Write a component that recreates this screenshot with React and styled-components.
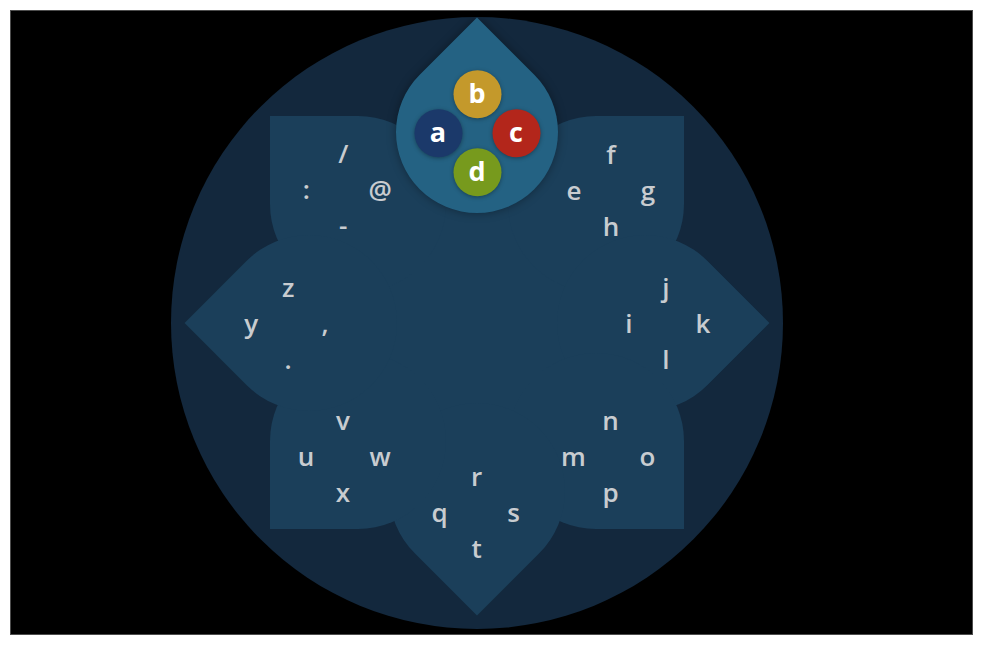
import React from "react";
import styled, { createGlobalStyle } from "styled-components";

const GlobalStyle = createGlobalStyle`
  html, body { margin: 0; padding: 0; background: #ffffff; }
  body { font-family: "Open Sans", "Noto Sans", sans-serif; }
`;

const Page = styled.div`
  padding: 10px;
  width: 982px;
  height: 646px;
  box-sizing: border-box;
`;

const Screen = styled.div`
  width: 963px;
  height: 625px;
  box-sizing: border-box;
  background: #000;
  border: 1px solid #4d4d4d;
  display: flex;
  align-items: center;
  padding-left: 160px;
`;

const Dial = styled.div`
  position: relative;
  width: 612px;
  height: 612px;
  flex: none;
  border-radius: 50%;
  background: #13283d;
  overflow: hidden;
  display: flex;
  align-items: center;
  justify-content: center;
`;

const CenterDisc = styled.div`
  width: 260px;
  height: 260px;
  border-radius: 50%;
  background: #1b3f5a;
`;

/* A petal: a square with three rounded corners; its sharp corner points outward. */
const Petal = styled.div`
  position: absolute;
  width: ${(p) => p.$size}px;
  height: ${(p) => p.$size}px;
  margin: ${(p) => -p.$size / 2}px 0 0 ${(p) => -p.$size / 2}px;
  box-sizing: border-box;
  border-radius: 0 50% 50% 50%;
  background: ${(p) => p.$color};
  box-shadow: ${(p) => (p.$shadow ? "0 0 10px rgba(0,0,0,0.35)" : "none")};
  display: flex;
  align-items: center;
  justify-content: center;
  padding: ${(p) => (p.$shift ? `0 ${p.$shift}px ${p.$shift}px 0` : "0")};
`;

const Cluster = styled.div`
  flex: none;
  display: grid;
  grid-template-columns: repeat(3, 37px);
  grid-template-rows: repeat(3, 36px);
  color: #c8ccd0;
  font-family: "Open Sans", "Noto Sans", sans-serif;
  font-weight: 600;
  font-size: 26px;
  line-height: 36px;
  text-align: center;
`;

const Key = styled.span`
  grid-column: ${(p) => p.$col};
  grid-row: ${(p) => p.$row};
`;

const ButtonGrid = styled.div`
  flex: none;
  display: grid;
  grid-template-columns: repeat(3, 39px);
  grid-template-rows: repeat(3, 39px);
  transform: rotate(-45deg);
`;

const RoundButton = styled.div`
  grid-column: ${(p) => p.$col};
  grid-row: ${(p) => p.$row};
  width: 48px;
  height: 48px;
  margin: -4.5px;
  border-radius: 50%;
  background: ${(p) => p.$color};
  box-shadow: 0 1px 4px rgba(0, 0, 0, 0.35);
  display: flex;
  align-items: center;
  justify-content: center;
  color: #ffffff;
  font-family: "Open Sans", "Noto Sans", sans-serif;
  font-weight: 700;
  font-size: 27px;
  line-height: 1;
  padding-bottom: 3px;
  box-sizing: border-box;
`;

const C = 306;
const PETAL_R = 168;
/* letters sit 21px further out than the petal's round part: 21/√2 ≈ 15px per axis */
const SHIFT = 30;

const groups = [
  { angle: -45, keys: ["/", ":", "@", "-"] },
  { angle: 45, keys: ["f", "e", "g", "h"] },
  { angle: 90, keys: ["j", "i", "k", "l"] },
  { angle: 135, keys: ["n", "m", "o", "p"] },
  { angle: 180, keys: ["r", "q", "s", "t"] },
  { angle: -135, keys: ["v", "u", "w", "x"] },
  { angle: -90, keys: ["z", "y", ",", "."] },
];

const slots = [
  { col: 2, row: 1 },
  { col: 1, row: 2 },
  { col: 3, row: 2 },
  { col: 2, row: 3 },
];

const buttons = [
  { label: "b", color: "#c4992b", col: 2, row: 1 },
  { label: "a", color: "#1b396a", col: 1, row: 2 },
  { label: "c", color: "#b3261b", col: 3, row: 2 },
  { label: "d", color: "#779a1d", col: 2, row: 3 },
];

const polar = (angle, r) => {
  const rad = (angle * Math.PI) / 180;
  return { left: C + r * Math.sin(rad), top: C - r * Math.cos(rad) };
};

export default function App() {
  const home = polar(0, 191);
  return (
    <>
      <GlobalStyle />
      <Page>
        <Screen>
          <Dial>
            <CenterDisc />
            {groups.map((g) => {
              const p = polar(g.angle, PETAL_R);
              const turn = g.angle + 45;
              return (
                <Petal
                  key={g.angle}
                  $size={176}
                  $color="#1b3f5a"
                  $shift={SHIFT}
                  style={{ left: p.left, top: p.top, transform: `rotate(${turn}deg)` }}
                >
                  <Cluster style={{ transform: `rotate(${-turn}deg)` }}>
                    {g.keys.map((k, i) => (
                      <Key key={k} $col={slots[i].col} $row={slots[i].row}>
                        {k}
                      </Key>
                    ))}
                  </Cluster>
                </Petal>
              );
            })}
            <Petal
              $size={162}
              $color="#246283"
              $shadow
              style={{ left: home.left, top: home.top, transform: "rotate(45deg)" }}
            >
              <ButtonGrid>
                {buttons.map((b) => (
                  <RoundButton key={b.label} $color={b.color} $col={b.col} $row={b.row}>
                    {b.label}
                  </RoundButton>
                ))}
              </ButtonGrid>
            </Petal>
          </Dial>
        </Screen>
      </Page>
    </>
  );
}
